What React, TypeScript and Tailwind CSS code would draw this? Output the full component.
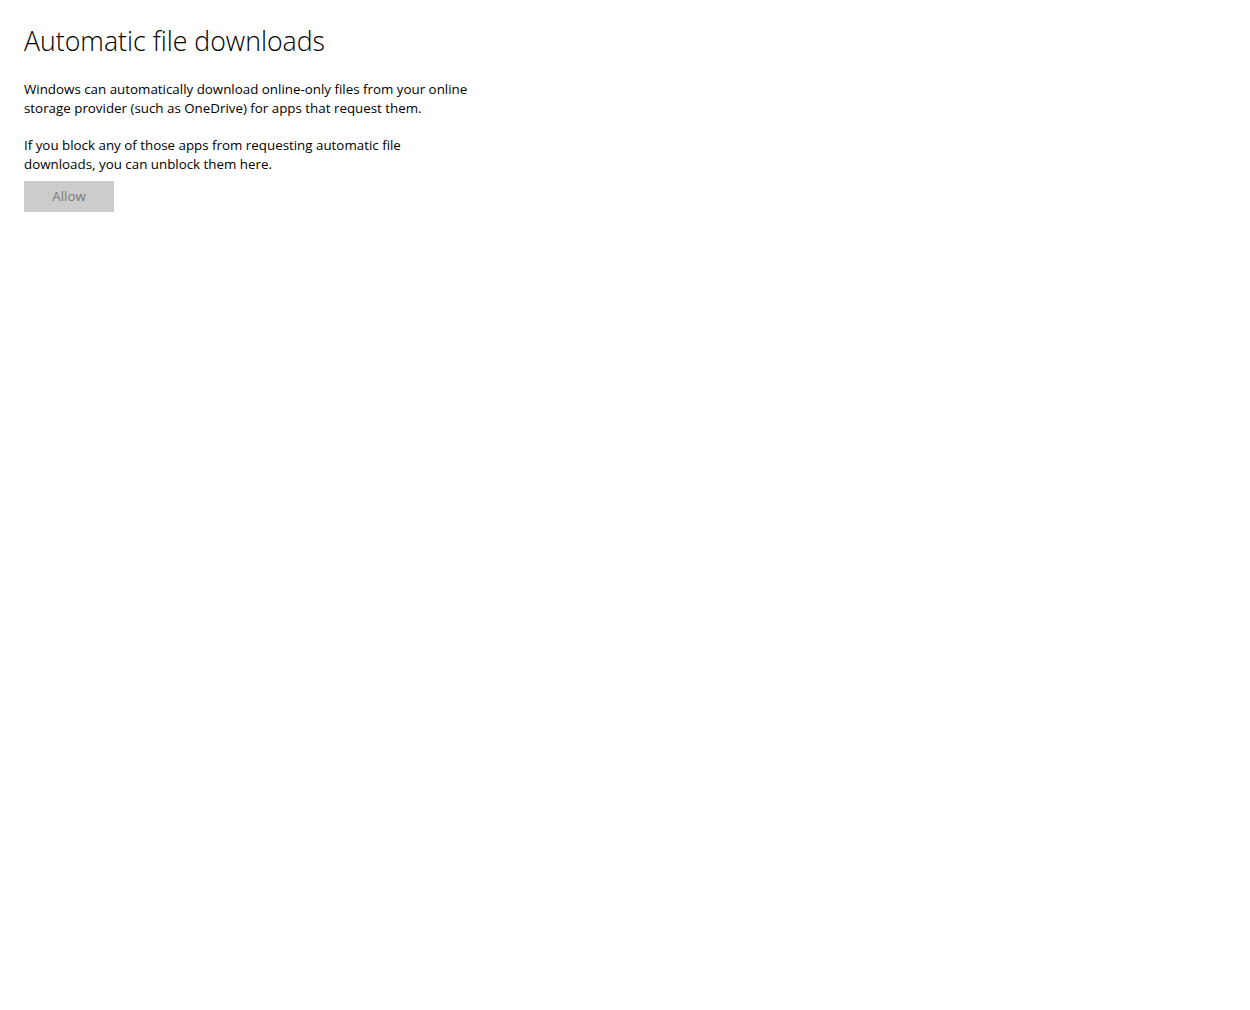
export default function App() {
  return (
    <div className="min-h-[1010px] w-full bg-white" style={{ fontFamily: '"Open Sans", "Noto Sans", sans-serif' }}>
      <div className="pl-6 pt-[21px]">
        <h1 className="text-[26.7px] leading-[40px] font-light text-black">Automatic file downloads</h1>
        <p className="mt-[19px] text-[13.35px] leading-[19px] text-black">
          Windows can automatically download online-only files from your online
          <br />
          storage provider (such as OneDrive) for apps that request them.
        </p>
        <p className="mt-[18px] text-[13.35px] leading-[19px] text-black">
          If you block any of those apps from requesting automatic file
          <br />
          downloads, you can unblock them here.
        </p>
        <button className="mt-[7px] flex h-[31px] w-[90px] items-center justify-center bg-[#cccccc] text-[13.35px] text-[#7a7a7a]">
          Allow
        </button>
      </div>
    </div>
  );
}
